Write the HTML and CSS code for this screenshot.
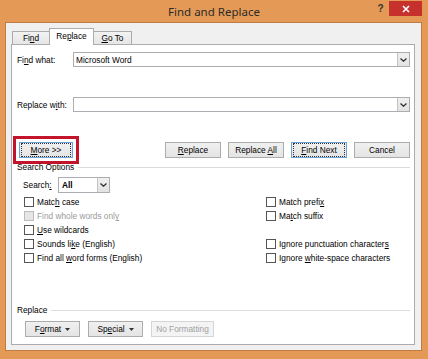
FILE: index.html
```html
<!DOCTYPE html>
<html lang="en">
<head>
    <meta charset="UTF-8">
    <title>Find and Replace</title>
    <link rel="stylesheet" href="styles.css">
</head>
<body>
    <div class="window">
        <div class="titlebar">
            <div class="title-spacer"></div>
            <div class="title">Find and Replace</div>
            <div class="help">?</div>
            <div class="close">
                <svg width="8" height="8" viewBox="0 0 8 8"><path d="M1 1L7 7M7 1L1 7" stroke="#fff" stroke-width="1.6"/></svg>
            </div>
        </div>
        <div class="client">
            <div class="tabs">
                <div class="tab tab-find">Fi<u>n</u>d</div>
                <div class="tab tab-replace active">Re<u>p</u>lace</div>
                <div class="tab tab-goto"><u>G</u>o To</div>
            </div>
            <div class="panel">
                <div class="field first">
                    <div class="field-label">Fi<u>n</u>d what:</div>
                    <div class="combo">
                        <span class="combo-text">Microsoft Word</span>
                        <span class="drop"><svg width="7" height="4" viewBox="0 0 7 4"><path d="M0.5 0.5L3.5 3.2L6.5 0.5" fill="none" stroke="#333" stroke-width="1.3"/></svg></span>
                    </div>
                </div>
                <div class="field second">
                    <div class="field-label">Replace w<u>i</u>th:</div>
                    <div class="combo">
                        <span class="combo-text"></span>
                        <span class="drop"><svg width="7" height="4" viewBox="0 0 7 4"><path d="M0.5 0.5L3.5 3.2L6.5 0.5" fill="none" stroke="#333" stroke-width="1.3"/></svg></span>
                    </div>
                </div>
                <div class="actions">
                    <button class="btn btn-more focused highlight"><span class="focus-ring"><span><u>M</u>ore &gt;&gt;</span></span></button>
                    <div class="actions-right">
                        <button class="btn"><span><u>R</u>eplace</span></button>
                        <button class="btn"><span>Replace <u>A</u>ll</span></button>
                        <button class="btn focused"><span class="focus-ring"><span><u>F</u>ind Next</span></span></button>
                        <button class="btn"><span>Cancel</span></button>
                    </div>
                </div>
                <div class="section-head search-head"><span>Search Options</span><div class="rule"></div></div>
                <div class="search-row">
                    <div class="search-label">Search<u>:</u></div>
                    <div class="select">
                        <span class="select-text">All</span>
                        <span class="drop"><svg width="7" height="4" viewBox="0 0 7 4"><path d="M0.5 0.5L3.5 3.2L6.5 0.5" fill="none" stroke="#333" stroke-width="1.3"/></svg></span>
                    </div>
                </div>
                <div class="options">
                    <label class="check"><span class="box"></span><span>Matc<u>h</u> case</span></label>
                    <label class="check"><span class="box"></span><span>Match prefi<u>x</u></span></label>
                    <label class="check disabled"><span class="box"></span><span>Find whole words onl<u>y</u></span></label>
                    <label class="check"><span class="box"></span><span>Ma<u>t</u>ch suffix</span></label>
                    <label class="check"><span class="box"></span><span><u>U</u>se wildcards</span></label>
                    <div></div>
                    <label class="check"><span class="box"></span><span>Sounds li<u>k</u>e (English)</span></label>
                    <label class="check"><span class="box"></span><span>Ignore punctuation character<u>s</u></span></label>
                    <label class="check"><span class="box"></span><span>Find all <u>w</u>ord forms (English)</span></label>
                    <label class="check"><span class="box"></span><span>Ignore <u>w</u>hite-space characters</span></label>
                </div>
                <div class="section-head replace-head"><span>Replace</span><div class="rule"></div></div>
                <div class="bottom-buttons">
                    <button class="btn btn-format"><span>F<u>o</u>rmat</span><svg class="caret" width="5" height="3" viewBox="0 0 5 3"><path d="M0 0H5L2.5 3Z" fill="#333"/></svg></button>
                    <button class="btn btn-special"><span>Sp<u>e</u>cial</span><svg class="caret" width="5" height="3" viewBox="0 0 5 3"><path d="M0 0H5L2.5 3Z" fill="#333"/></svg></button>
                    <button class="btn btn-noformat" disabled><span>No Formatting</span></button>
                </div>
            </div>
        </div>
    </div>
</body>
</html>
```

FILE: styles.css
```css
* { margin: 0; padding: 0; box-sizing: border-box; }
body {
    background-color: #e49a56;
    font-family: 'Liberation Sans', Arial, sans-serif;
    font-size: 8.3px;
    color: #000;
}
u { text-decoration-thickness: 1px; text-underline-offset: 1px; }
.window {
    width: 428px;
    height: 359px;
    display: flex;
    flex-direction: column;
}
.titlebar {
    height: 23px;
    display: flex;
    align-items: flex-start;
}
.title-spacer { width: 56px; }
.title {
    flex: 1;
    text-align: center;
    font-family: 'Noto Sans', sans-serif;
    font-size: 11.5px;
    line-height: 23px;
    color: #2b2b2b;
}
.help {
    width: 17px;
    text-align: center;
    font-family: 'Liberation Sans', sans-serif;
    font-weight: bold;
    font-size: 10px;
    line-height: 15px;
    margin-top: 1px;
    color: #333;
}
.close {
    width: 33px;
    height: 15px;
    margin-top: 1px;
    margin-right: 6px;
    background-color: #c7312d;
    display: flex;
    align-items: center;
    justify-content: center;
}
.client {
    flex: 1;
    margin: 0 7px 9px 6px;
    padding: 5px 6px 5px 5px;
    background-color: #f0f0f0;
    box-shadow: 0 0 0 1px rgba(120, 70, 30, 0.35);
    display: flex;
    flex-direction: column;
}
.tabs {
    height: 16px;
    display: flex;
    align-items: flex-end;
    padding-left: 1px;
}
.tab {
    height: 13px;
    line-height: 12px;
    text-align: center;
    border: 1px solid #acacac;
    border-bottom: none;
    background: linear-gradient(#f2f2f2, #e6e6e6);
}
.tab-find { width: 38px; }
.tab-replace { width: 45px; margin-left: -1px; }
.tab-goto { width: 39px; margin-left: -1px; }
.tab.active {
    height: 17px;
    line-height: 15px;
    margin-bottom: -1px;
    background: #fff;
    position: relative;
    z-index: 1;
}
.panel {
    flex: 1;
    background-color: #fff;
    border: 1px solid #acacac;
    padding: 0 4px 0 5px;
    display: flex;
    flex-direction: column;
}
.field {
    height: 15px;
    display: flex;
    align-items: center;
}
.field.first { margin-top: 7px; }
.field.second { margin-top: 30px; }
.field-label { width: 56px; }
.combo {
    flex: 1;
    height: 15px;
    border: 1px solid #abadb3;
    display: flex;
    justify-content: space-between;
    align-items: center;
}
.combo-text { padding-left: 2px; }
.drop {
    width: 12px;
    height: 100%;
    border-left: 1px solid #c3c3c3;
    background: linear-gradient(#f0f0f0, #e2e2e2);
    display: flex;
    align-items: center;
    justify-content: center;
}
.actions {
    margin-top: 30px;
    display: flex;
    justify-content: space-between;
}
.actions-right {
    display: flex;
    gap: 7px;
}
.btn {
    width: 56px;
    height: 16px;
    font-family: inherit;
    font-size: 8.3px;
    color: #000;
    border: 1px solid #acacac;
    background: linear-gradient(#f0f0f0, #e4e4e4);
    display: flex;
    align-items: center;
    justify-content: center;
    white-space: nowrap;
}
.btn .caret { margin-left: 4px; }
.btn.focused { border-color: #6aa3d8; }
.focus-ring {
    border: 1px dotted #333;
    width: 100%;
    height: 100%;
    margin: 1px;
    display: flex;
    align-items: center;
    justify-content: center;
}
.btn-more { width: 54px; margin-left: 2px; }
.highlight {
    outline: 3px solid #c3142c;
    outline-offset: 3px;
}
.section-head {
    height: 10px;
    display: flex;
    align-items: center;
}
.section-head .rule {
    flex: 1;
    border-top: 1px solid #dcdcdc;
    margin-left: 4px;
}
.search-head { margin-top: 4px; }
.search-row {
    margin-top: 5px;
    height: 16px;
    display: flex;
    align-items: center;
    padding-left: 6px;
}
.search-label { width: 35px; }
.select {
    width: 52px;
    height: 16px;
    border: 1px solid #abadb3;
    display: flex;
    justify-content: space-between;
    align-items: center;
}
.select-text { padding-left: 3px; font-weight: bold; }
.options {
    margin-top: 2px;
    padding-left: 7px;
    display: grid;
    grid-template-columns: 242px 1fr;
    grid-auto-rows: 14px;
}
.check {
    display: flex;
    align-items: center;
    white-space: nowrap;
}
.box {
    width: 10px;
    height: 10px;
    border: 1px solid #555;
    background: #fff;
    margin-right: 3px;
}
.check.disabled { color: #9a9a9a; }
.check.disabled .box {
    border-color: #bcbcbc;
    background: #e6e6e6;
}
.replace-head { margin-top: 40px; }
.bottom-buttons {
    margin-top: 6px;
    padding-left: 8px;
    display: flex;
    gap: 8px;
}
.btn-format, .btn-special { width: 55px; }
.btn-noformat {
    width: 63px;
    color: #a0a0a0;
    border-color: #d5d5d5;
    background: #f4f4f4;
}
```
